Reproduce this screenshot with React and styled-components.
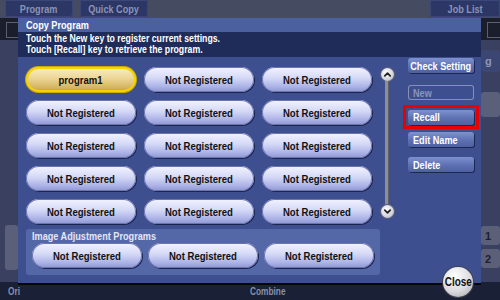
import React from 'react';
import styled, { createGlobalStyle, css } from 'styled-components';

const GlobalStyle = createGlobalStyle`
  html, body { margin: 0; padding: 0; background: #1c2238; }
  body { font-family: "Liberation Sans", Arial, sans-serif; }
  * { box-sizing: border-box; }
`;

// the panel font is a narrow bold face: squeeze Liberation Sans to match
const Cond = styled.span`
  display: inline-block;
  white-space: nowrap;
  transform: scaleX(0.83);
  transform-origin: ${(p) => p.$origin || 'center'};
`;

const Screen = styled.div`
  position: relative;
  width: 500px;
  height: 300px;
  overflow: hidden;
  display: flex;
  flex-direction: column;
  background: #1d2540;
`;

const TopBar = styled.div`
  height: 18px;
  display: flex;
  align-items: flex-start;
  gap: 7px;
  padding-left: 5px;
  background: #454b61;
`;

const Tab = styled.div`
  width: 68px;
  height: 17px;
  display: flex;
  align-items: center;
  justify-content: center;
  background: #2d3766;
  border-radius: 0 0 3px 3px;
  box-shadow: inset 0 0 0 1px #3b4678;
  color: #8993b6;
  font-weight: bold;
  font-size: 11px;
  ${(p) => p.$right && css`margin-left: auto; width: 70px;`}
`;

const Middle = styled.div`
  flex: 1;
  display: flex;
  justify-content: space-between;
`;

const Rail = styled.div`
  width: ${(p) => p.$w}px;
  display: flex;
  flex-direction: column;
  background: #3a4160;
`;

const RailHead = styled.div`
  height: 22px;
  background: #1b1e2b;
  position: relative;
  &::after {
    content: '';
    position: absolute;
    left: 6px;
    top: 4px;
    width: 12px;
    height: 14px;
    border: 1px solid #5a6072;
  }
`;

const RailBox = styled.div`
  margin-top: ${(p) => p.$mt}px;
  height: ${(p) => p.$h}px;
  margin-left: ${(p) => p.$ml || 0}px;
  background: ${(p) => p.$bg || '#5a6079'};
  border-radius: 3px;
  color: ${(p) => p.$color || '#1b2030'};
  font-weight: bold;
  font-size: 11px;
  display: flex;
  align-items: center;
  padding-left: 4px;
`;

const BottomBar = styled.div`
  height: 18px;
  background: #1a2036;
  color: #8790aa;
  font-weight: bold;
  font-size: 10px;
  display: flex;
  align-items: center;
  padding: 0 0 0 8px;
`;

const BottomLabel = styled.span`
  margin-left: ${(p) => p.$ml || 0}px;
`;

const Dialog = styled.div`
  position: absolute;
  left: 18px;
  top: 18px;
  width: 463px;
  height: 265px;
  display: flex;
  flex-direction: column;
  background: #3d4f8f;
  box-shadow: 0 2px 0 #05070d;
`;

const Title = styled.div`
  height: 14px;
  padding-left: 8px;
  background: #4b619f;
  color: #fff;
  font-weight: bold;
  font-size: 11px;
  line-height: 14px;
`;

const Message = styled.div`
  height: 25px;
  padding: 1px 8px 0;
  background: #1f2b59;
  color: #fff;
  font-weight: bold;
  font-size: 10.5px;
  line-height: 11px;
`;

const Body = styled.div`
  flex: 1;
  display: flex;
  align-items: flex-start;
  padding-left: 8px;
`;

const LeftCol = styled.div`
  width: 354px;
  padding-top: 10px;
  display: flex;
  flex-direction: column;
  gap: 5px;
`;

const Grid = styled.div`
  display: grid;
  grid-template-columns: repeat(3, 110px);
  grid-auto-rows: 25px;
  column-gap: 8px;
  row-gap: 8px;
`;

const Pill = styled.div`
  height: 25px;
  border-radius: 13px;
  display: flex;
  align-items: center;
  justify-content: center;
  font-weight: bold;
  font-size: 11.5px;
  color: #111;
  background: linear-gradient(#f3f4ff 0%, #d4d8f6 45%, #aab1e6 80%, #8e96d2 100%);
  box-shadow: inset 0 0 0 1px #6c74b0, 1px 1px 0 #1c2550;
  ${(p) =>
    p.$active &&
    css`
      background: linear-gradient(#fbf0c6 0%, #ecd596 45%, #d2b25e 85%, #b8963e 100%);
      box-shadow: inset 0 0 0 2px #f3d400, 0 0 0 1px #c9ac00;
    `}
`;

const Panel = styled.div`
  width: 354px;
  height: 46px;
  background: #5468a8;
  border-radius: 3px;
  padding: 1px 4px 0 6px;
`;

const PanelLabel = styled.div`
  color: #e3e6f6;
  font-weight: bold;
  font-size: 11px;
  line-height: 12px;
  height: 13px;
`;

const PanelRow = styled.div`
  display: grid;
  grid-template-columns: repeat(3, 110px);
  column-gap: 6px;
`;

const ScrollCol = styled.div`
  width: 14px;
  padding-top: 11px;
  display: flex;
  flex-direction: column;
  align-items: center;
`;

const ScrollBtn = styled.div`
  width: 13px;
  height: 13px;
  border-radius: 50%;
  background: radial-gradient(circle at 40% 35%, #ffffff, #d2d4dc 60%, #9a9ca8);
  box-shadow: 0 0 0 1px #5c6078;
  display: flex;
  align-items: center;
  justify-content: center;
`;

const Track = styled.div`
  width: 4px;
  height: 124px;
  background: #8e8e94;
  box-shadow: inset -1px 0 0 #5f5f66;
`;

const SideCol = styled.div`
  width: 76px;
  margin-left: 9px;
  padding-top: 1px;
  display: flex;
  flex-direction: column;
  align-items: center;
`;

const SideBtn = styled.div`
  width: 66px;
  height: 15px;
  margin-top: ${(p) => p.$mt || 0}px;
  border-radius: 3px;
  padding-left: ${(p) => (p.$center ? 0 : 5)}px;
  display: flex;
  align-items: center;
  justify-content: ${(p) => (p.$center ? 'center' : 'flex-start')};
  color: #fff;
  font-weight: bold;
  font-size: 11px;
  background: linear-gradient(#7e91cf, #5a6eb0 60%, #4c60a2);
  box-shadow: 1px 1px 0 #1d2753;
  ${(p) =>
    p.$disabled &&
    css`
      background: transparent;
      box-shadow: inset 0 0 0 1px #8790b4;
      color: #8a95bd;
    `}
`;

const Highlight = styled.div`
  margin-top: 5px;
  width: 76px;
  height: 24px;
  border: 3px solid #e80000;
  display: flex;
  align-items: center;
  justify-content: center;
`;

const CloseBtn = styled.div`
  position: absolute;
  left: 443px;
  top: 267px;
  width: 30px;
  height: 30px;
  border-radius: 50%;
  background: radial-gradient(circle at 40% 30%, #ffffff, #dcdce0 55%, #9c9ca4);
  box-shadow: 0 0 0 1px #40424c;
  display: flex;
  align-items: center;
  justify-content: center;
  font-weight: bold;
  font-size: 12px;
  color: #111;
`;

const Chevron = ({ down }) => (
  <svg width="9" height="9" viewBox="0 0 10 10">
    <path
      d={down ? 'M2 3.5 L5 6.5 L8 3.5' : 'M2 6.5 L5 3.5 L8 6.5'}
      fill="none"
      stroke="#222"
      strokeWidth="2"
      strokeLinecap="round"
      strokeLinejoin="round"
    />
  </svg>
);

const programs = ['program1', ...Array(14).fill('Not Registered')];

export default function App() {
  return (
    <>
      <GlobalStyle />
      <Screen>
        <TopBar>
          <Tab><Cond>Program</Cond></Tab>
          <Tab><Cond>Quick Copy</Cond></Tab>
          <Tab $right><Cond>Job List</Cond></Tab>
        </TopBar>
        <Middle>
          <Rail $w={18}>
            <RailHead />
            <RailBox $mt={185} $h={45} $ml={5} />
          </Rail>
          <Rail $w={19}>
            <RailHead />
            <RailBox $mt={10} $h={22} $bg="#3b4672" $color="#8d97bd">g</RailBox>
            <RailBox $mt={20} $h={25} />
            <RailBox $mt={109} $h={19} $bg="#5b6078">1</RailBox>
            <RailBox $mt={4} $h={19} $bg="#5b6078">2</RailBox>
          </Rail>
        </Middle>
        <BottomBar>
          <BottomLabel><Cond $origin="left">Ori</Cond></BottomLabel>
          <BottomLabel $ml={228}><Cond $origin="left">Combine</Cond></BottomLabel>
        </BottomBar>

        <Dialog>
          <Title>
            <Cond $origin="left">Copy Program</Cond>
          </Title>
          <Message>
            <Cond $origin="left">Touch the New key to register current settings.</Cond>
            <br />
            <Cond $origin="left">Touch [Recall] key to retrieve the program.</Cond>
          </Message>
          <Body>
            <LeftCol>
              <Grid>
                {programs.map((name, i) => (
                  <Pill key={i} $active={i === 0}>
                    <Cond>{name}</Cond>
                  </Pill>
                ))}
              </Grid>
              <Panel>
                <PanelLabel>
                  <Cond $origin="left">Image Adjustment Programs</Cond>
                </PanelLabel>
                <PanelRow>
                  {[0, 1, 2].map((i) => (
                    <Pill key={i}>
                      <Cond>Not Registered</Cond>
                    </Pill>
                  ))}
                </PanelRow>
              </Panel>
            </LeftCol>
            <ScrollCol>
              <ScrollBtn>
                <Chevron />
              </ScrollBtn>
              <Track />
              <ScrollBtn>
                <Chevron down />
              </ScrollBtn>
            </ScrollCol>
            <SideCol>
              <SideBtn $center><Cond>Check Setting</Cond></SideBtn>
              <SideBtn $mt={12} $disabled><Cond $origin="left">New</Cond></SideBtn>
              <Highlight>
                <SideBtn><Cond $origin="left">Recall</Cond></SideBtn>
              </Highlight>
              <SideBtn $mt={3}><Cond $origin="left">Edit Name</Cond></SideBtn>
              <SideBtn $mt={10}><Cond $origin="left">Delete</Cond></SideBtn>
            </SideCol>
          </Body>
        </Dialog>
        <CloseBtn><Cond>Close</Cond></CloseBtn>
      </Screen>
    </>
  );
}
